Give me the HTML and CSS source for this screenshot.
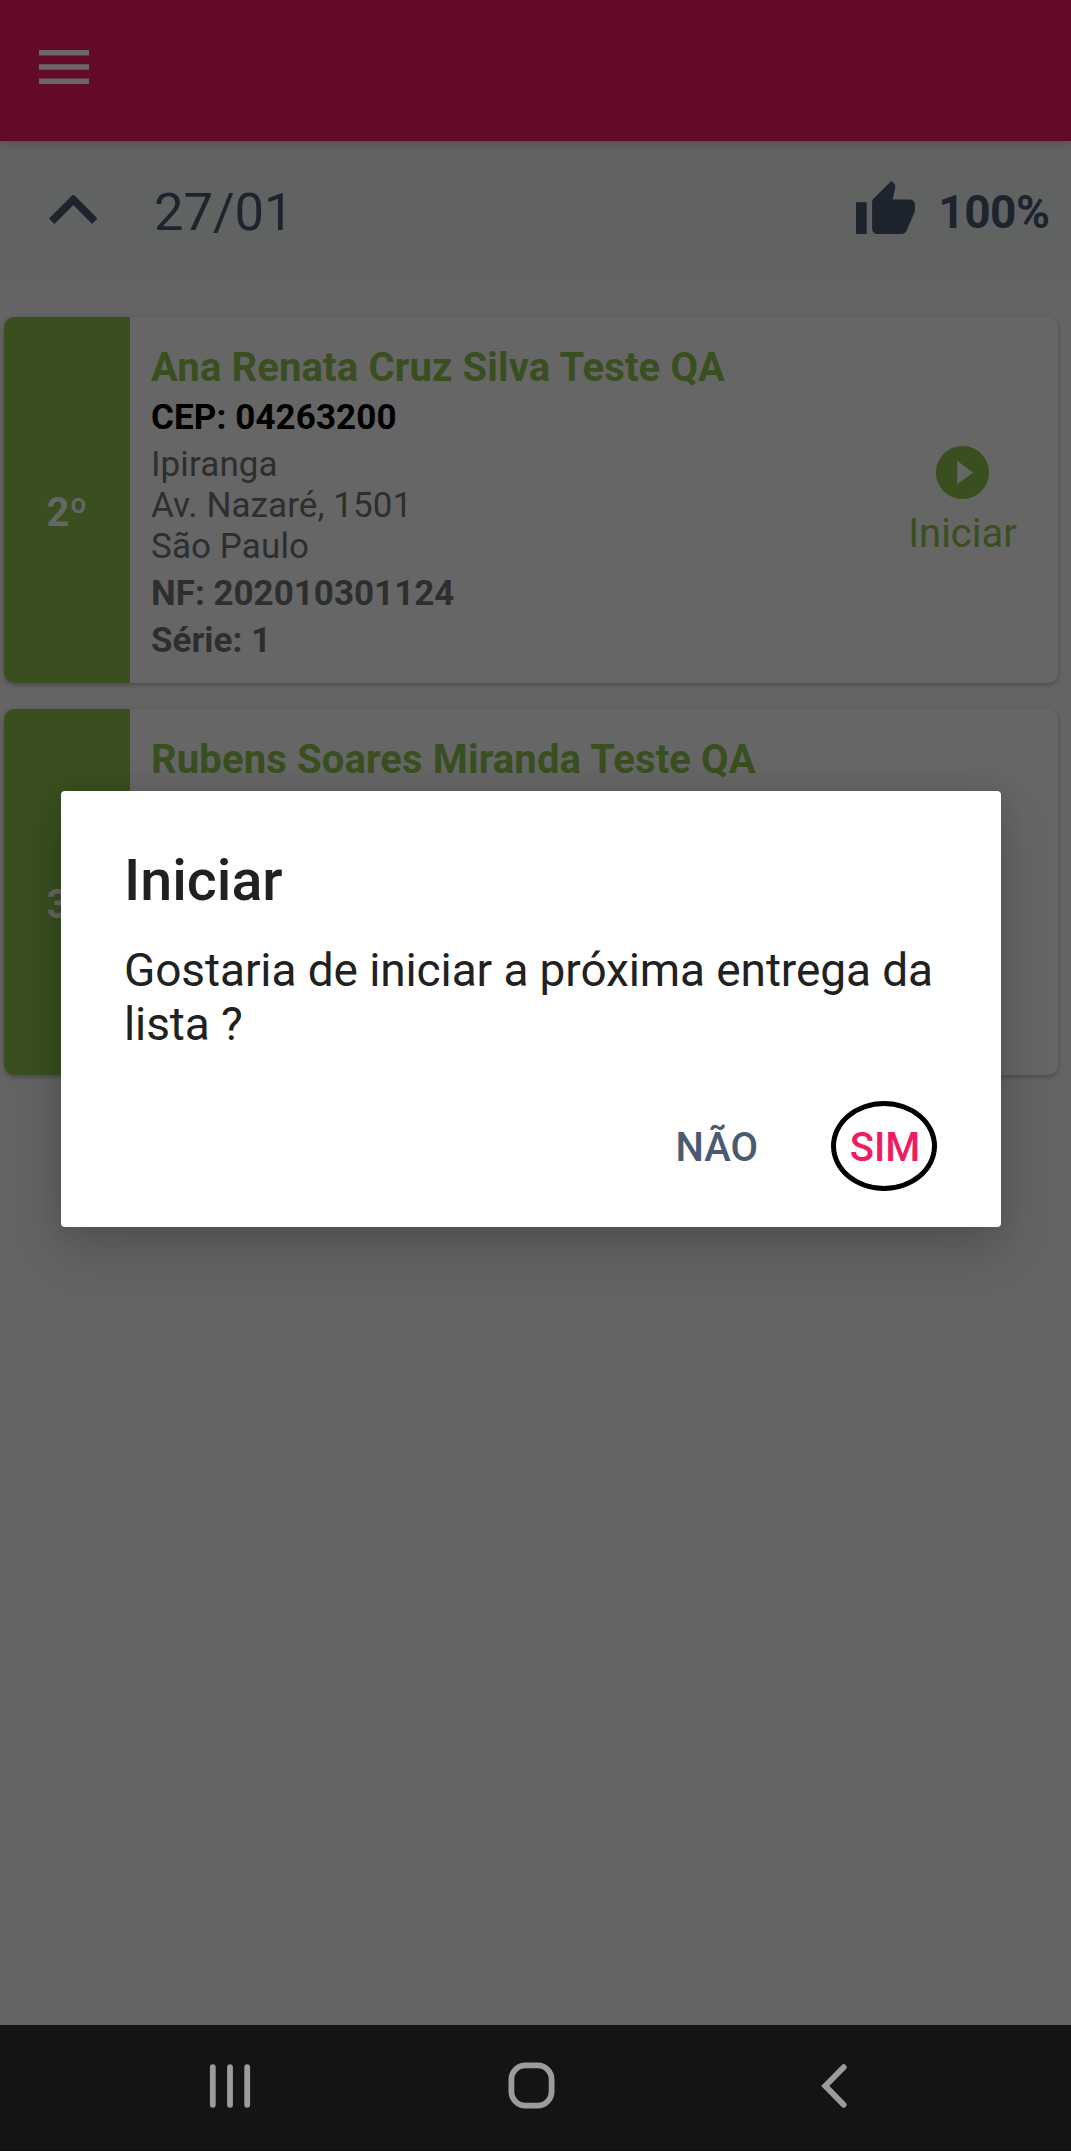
FILE: index.html
```html
<!DOCTYPE html>
<html lang="pt-BR">
<head>
<meta charset="utf-8">
<title>Entregas</title>
<link rel="stylesheet" href="styles.css">
</head>
<body>
<div class="screen">
  <header class="topbar">
    <svg class="menu" width="50" height="34" viewBox="0 0 50 34"><path d="M0 0h50v5.5H0zM0 14.2h50v5.5H0zM0 28.4h50v5.5H0z"/></svg>
  </header>

  <section class="daybar">
    <svg class="chevron" width="48" height="30" viewBox="0 0 48 30"><path d="M2.7 26.3 24.3 4.6 45.8 26.3"/></svg>
    <span class="date">27/01</span>
    <svg class="thumb" width="59" height="53" viewBox="1 1 22 20" preserveAspectRatio="none"><path d="M1 21h4V9H1v12zm22-11c0-1.1-.9-2-2-2h-6.31l.95-4.57.03-.32c0-.41-.17-.79-.44-1.06L14.17 1 7.59 7.59C7.22 7.95 7 8.45 7 9v10c0 1.1.9 2 2 2h9c.83 0 1.54-.5 1.84-1.22l3.02-7.05c.09-.23.14-.47.14-.73v-2z"/></svg>
    <span class="percent">100%</span>
  </section>

  <main class="list">
    <article class="card">
      <div class="order">2º</div>
      <div class="info">
        <h2 class="name">Ana Renata Cruz Silva Teste QA</h2>
        <p class="cep">CEP: 04263200</p>
        <p class="address">Ipiranga<br>Av. Nazaré, 1501<br>São Paulo</p>
        <p class="meta">NF: 202010301124</p>
        <p class="meta">Série: 1</p>
      </div>
      <div class="start">
        <svg width="53" height="53" viewBox="2 2 20 20"><path d="M12 2C6.48 2 2 6.48 2 12s4.48 10 10 10 10-4.48 10-10S17.52 2 12 2zm-2 14.4V7.6l6 4.4-6 4.4z"/></svg>
        <span>Iniciar</span>
      </div>
    </article>
    <article class="card">
      <div class="order">3º</div>
      <div class="info">
        <h2 class="name">Rubens Soares Miranda Teste QA</h2>
      </div>
    </article>
  </main>

  <nav class="navbar">
    <svg class="recents" width="42" height="44" viewBox="0 0 42 44"><path d="M3.8 3.2v37.6M21 3.2v37.6M38.2 3.2v37.6"/></svg>
    <svg class="home" width="47" height="47" viewBox="0 0 47 47"><rect x="3.4" y="3.4" width="40.2" height="40.2" rx="14"/></svg>
    <svg class="back" width="27" height="44" viewBox="0 0 27 44"><path d="M22.7 3.2 4.2 21.9l18.5 18.9"/></svg>
  </nav>

  <div class="dialog" role="dialog">
    <h1 class="title">Iniciar</h1>
    <p class="message">Gostaria de iniciar a próxima entrega da lista ?</p>
    <div class="actions">
      <button class="btn no">NÃO</button>
      <button class="btn yes">SIM</button>
    </div>
  </div>
</div>
</body>
</html>
```
FILE: styles.css
```css
* { box-sizing: border-box; }
body { margin: 0; font-family: Roboto, sans-serif; background: #646464; }
h1, h2, p { margin: 0; }
svg { display: block; flex: none; }

.screen {
  position: relative;
  display: flex;
  flex-direction: column;
  width: 1071px;
  height: 2151px;
  overflow: hidden;
  background: #646464;
}

.topbar {
  height: 141px;
  padding: 50px 0 0 39px;
  background: #620a26;
  box-shadow: 0 2px 9px rgba(0, 0, 0, .2);
  z-index: 1;
}
.menu { fill: #6b6668; }

.daybar {
  display: flex;
  align-items: center;
  height: 137px;
  padding: 0 21.5px 0 48.5px;
  background: #606362;
  color: #1e242e;
}
.chevron { fill: none; stroke: #1e242e; stroke-width: 7.6; }
.date { margin-left: 57.5px; font-size: 52.6px; line-height: 62px; padding-top: 5px; letter-spacing: -.1px; }
.thumb { margin: -4px 0 0 auto; fill: #1e242e; }
.percent { margin-left: 23px; font-size: 46px; line-height: 54px; font-weight: 700; padding-top: 5px; letter-spacing: -.5px; }

.list {
  flex: 1;
  display: flex;
  flex-direction: column;
  gap: 26px;
  padding: 39px 13px 0 4px;
}
.card {
  display: flex;
  height: 366px;
  border-radius: 10px;
  background: #666;
  box-shadow: 0 2px 5px rgba(0, 0, 0, .26);
}
.order {
  width: 126px;
  padding-top: 172px;
  border-radius: 10px 0 0 10px;
  background: #394f1f;
  color: #666;
  font-size: 40px;
  line-height: 47px;
  font-weight: 700;
  text-align: center;
}
.info {
  flex: 1;
  display: flex;
  flex-direction: column;
  gap: 6px;
  padding: 27px 0 0 21px;
  font-size: 35px;
  line-height: 41px;
  color: #2e2e2e;
}
.name { font-size: 40px; line-height: 47px; font-weight: 700; letter-spacing: .13px; color: #394f1f; }
.cep { font-weight: 700; letter-spacing: .1px; color: #000; }
.address { letter-spacing: .1px; }
.meta { font-weight: 700; }
.start {
  display: flex;
  flex-direction: column;
  align-items: center;
  gap: 11px;
  width: 191px;
  padding-top: 129px;
  color: #394f1f;
  font-size: 40px;
  line-height: 47px;
}
.start svg { fill: #394f1f; }

.navbar {
  display: flex;
  height: 126px;
  padding-top: 37px;
  background: #141414;
  border-bottom: 1px solid #100d0e;
}
.navbar svg { fill: none; stroke: #9c9c9c; stroke-width: 5.8; stroke-linecap: round; }
.recents { margin: 2px 0 0 208.5px; }
.home { margin-left: 257.5px; }
.back { margin: 2px 0 0 265.5px; }

.dialog {
  position: absolute;
  left: 61px;
  top: 791px;
  width: 940px;
  height: 436px;
  padding: 56px 64px 0 63px;
  border-radius: 4px;
  background: #fff;
  color: #212121;
  box-shadow: 0 22px 54px rgba(0, 0, 0, .19), 0 0 24px rgba(0, 0, 0, .08);
}
.title { font-size: 57.4px; line-height: 67px; font-weight: 500; }
.message { margin-top: 29px; font-size: 46px; line-height: 54px; letter-spacing: -.1px; }
.actions { display: flex; justify-content: flex-end; gap: 73px; margin-top: 50px; }
.btn {
  height: 90px;
  padding: 3px 0 0;
  border: 0;
  background: none;
  font: 500 40px/47px Roboto, sans-serif;
  color: #4a5a72;
}
.yes { width: 106px; padding-left: 2px; border: 5px solid #000; border-radius: 50%; color: #f01c62; }
```
